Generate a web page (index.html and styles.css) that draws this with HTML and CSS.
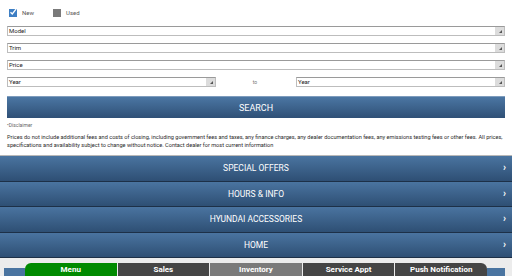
FILE: index.html
```html
<!DOCTYPE html>
<html>
<head>
<meta charset="utf-8">
<link rel="stylesheet" href="styles.css">
</head>
<body>
<div class="form">
  <div class="checks">
    <label class="check"><span class="box checked"><svg viewBox="0 0 8 8" width="8" height="8"><path d="M1.5 4.2 L3.3 6 L7.2 0.8" fill="none" stroke="#fff" stroke-width="1.3"/></svg></span>New</label>
    <label class="check"><span class="box"></span>Used</label>
  </div>
  <div class="select"><span class="val">Model</span><span class="arrow"></span></div>
  <div class="select"><span class="val">Trim</span><span class="arrow"></span></div>
  <div class="select"><span class="val">Price</span><span class="arrow"></span></div>
  <div class="years">
    <div class="select half"><span class="val">Year</span><span class="arrow"></span></div>
    <span class="to">to</span>
    <div class="select half"><span class="val">Year</span><span class="arrow"></span></div>
  </div>
  <div class="search">SEARCH</div>
  <div class="disclaimer">•Disclaimer</div>
  <p class="fine">Prices do not include additional fees and costs of closing, including government fees and taxes, any finance charges, any dealer documentation fees, any emissions testing fees or other fees. All prices, specifications and availability subject to change without notice. Contact dealer for most current information</p>
</div>
<div class="menu">
  <div class="row">SPECIAL OFFERS<span class="chev">›</span></div>
  <div class="row">HOURS &amp; INFO<span class="chev">›</span></div>
  <div class="row">HYUNDAI ACCESSORIES<span class="chev">›</span></div>
  <div class="row">HOME<span class="chev">›</span></div>
</div>
<div class="tabbar">
  <div class="stub"></div>
  <div class="tab green first">Menu</div>
  <div class="tab dark">Sales</div>
  <div class="tab mid">Inventory</div>
  <div class="tab dark">Service Appt</div>
  <div class="tab dark last">Push Notification</div>
  <div class="stub"></div>
</div>
</body>
</html>
```
FILE: styles.css
```css
* { box-sizing: border-box; }
html, body { margin: 0; padding: 0; background: #fff; }
body { font-family: Roboto, "Liberation Sans", Arial, sans-serif; width: 512px; height: 276px; overflow: hidden; }

.form { padding: 8px 7px 0 7px; }

.checks { display: flex; align-items: center; height: 9px; padding-left: 2px; font-size: 6px; color: #555; }
.check { display: flex; align-items: center; margin-right: 19px; }
.box { width: 8px; height: 8px; background: #7a7a7a; margin-right: 5px; display: inline-block; position: relative; }
.box.checked { background: #3e7fc4; }
.box svg { display: block; position: absolute; left: 0; top: -1px; }

.select { height: 10px; border: 1px solid #bdbdbd; border-top-color: #9a9a9a; background: #fff; margin-top: 7px; display: flex; align-items: center; justify-content: space-between; font-size: 6px; color: #222; }
.checks + .select { margin-top: 9px; }
.val { padding-left: 1px; line-height: 8px; }
.arrow { width: 9px; height: 8px; background: #dcdcdc; position: relative; }
.arrow::after { content: ""; position: absolute; right: 2px; bottom: 2px; width: 0; height: 0; border-left: 3px solid transparent; border-bottom: 3px solid #555; }

.years { display: flex; align-items: center; margin-top: 7px; }
.years .select { margin-top: 0; }
.half { width: 209px; }
.to { flex: 1; text-align: center; font-size: 5px; color: #777; padding-right: 2px; }

.search { margin-top: 9px; height: 22px; background: linear-gradient(#4b76a3, #2f5076); color: #fff; font-size: 9px; display: flex; align-items: center; justify-content: center; border-top: 1px solid #7e9cbd; }

.disclaimer { font-size: 5px; color: #666; margin-top: 4px; line-height: 7px; }
.fine { font-size: 5.6px; color: #2a2a2a; margin: 4px 0 0 0; line-height: 8px; }

.menu { margin-top: 6px; border-top: 1px solid #b8b8b8; }
.row { height: 25.5px; background: linear-gradient(#4a74a0, #2e4f74); border-bottom: 1px solid #1d3047; color: #fff; font-size: 8.5px; font-weight: normal; display: flex; align-items: center; justify-content: center; position: relative; }
.chev { position: absolute; right: 6px; top: 50%; transform: translateY(-55%); font-size: 10px; font-weight: bold; }

.tabbar { height: 19px; background: #ececec; display: flex; align-items: flex-end; padding: 0 7px 0 4px; }
.stub { width: 21px; height: 9px; background: #4a74a0; }
.tabbar .stub:last-child { width: 18px; }
.tab { height: 14px; width: 92px; color: #fff; font-weight: bold; font-size: 8px; display: flex; align-items: center; justify-content: center; margin-right: 1px; padding-bottom: 1px; }
.tab.last { margin-right: 0; }
.green { background: #008a00; border-top-left-radius: 6px; }
.dark { background: #454545; }
.mid { background: #7a7a7a; }
.last { border-top-right-radius: 6px; }
```
